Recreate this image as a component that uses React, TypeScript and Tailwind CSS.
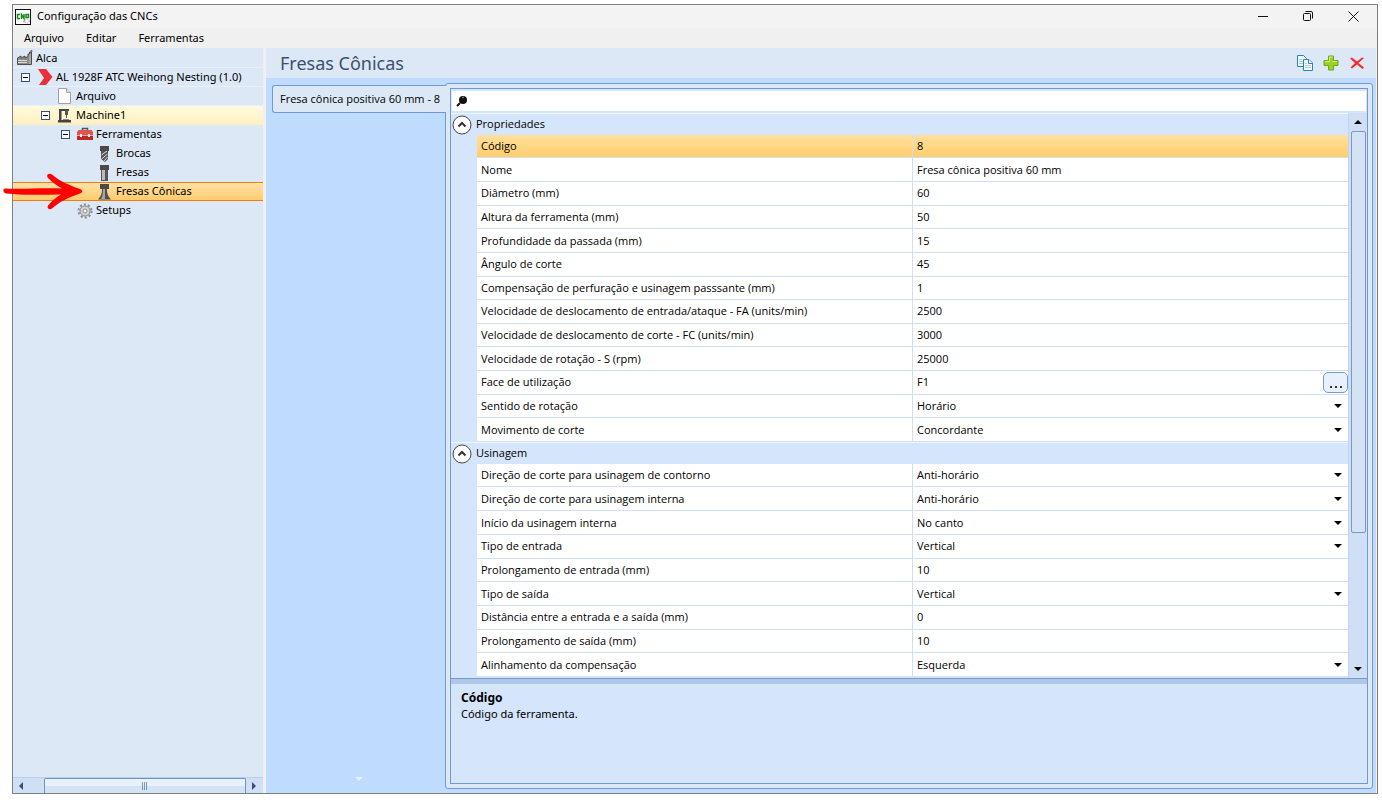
import { useState } from 'react';
import type { ReactNode } from 'react';

type Property = {
    label: string;
    value: string;
    kind?: 'select' | 'dialog';
};

type TreeNode = {
    label: string;
    level: number;
    icon: ReactNode;
    expandable?: boolean;
    state?: 'banded' | 'active' | 'selected';
};

const generalProperties: Property[] = [
    { label: 'Código', value: '8' },
    { label: 'Nome', value: 'Fresa cônica positiva 60 mm' },
    { label: 'Diâmetro (mm)', value: '60' },
    { label: 'Altura da ferramenta (mm)', value: '50' },
    { label: 'Profundidade da passada (mm)', value: '15' },
    { label: 'Ângulo de corte', value: '45' },
    { label: 'Compensação de perfuração e usinagem passsante (mm)', value: '1' },
    { label: 'Velocidade de deslocamento de entrada/ataque - FA (units/min)', value: '2500' },
    { label: 'Velocidade de deslocamento de corte - FC (units/min)', value: '3000' },
    { label: 'Velocidade de rotação - S (rpm)', value: '25000' },
    { label: 'Face de utilização', value: 'F1', kind: 'dialog' },
    { label: 'Sentido de rotação', value: 'Horário', kind: 'select' },
    { label: 'Movimento de corte', value: 'Concordante', kind: 'select' },
];

const millingProperties: Property[] = [
    { label: 'Direção de corte para usinagem de contorno', value: 'Anti-horário', kind: 'select' },
    { label: 'Direção de corte para usinagem interna', value: 'Anti-horário', kind: 'select' },
    { label: 'Início da usinagem interna', value: 'No canto', kind: 'select' },
    { label: 'Tipo de entrada', value: 'Vertical', kind: 'select' },
    { label: 'Prolongamento de entrada (mm)', value: '10' },
    { label: 'Tipo de saída', value: 'Vertical', kind: 'select' },
    { label: 'Distância entre a entrada e a saída (mm)', value: '0' },
    { label: 'Prolongamento de saída (mm)', value: '10' },
    { label: 'Alinhamento da compensação', value: 'Esquerda', kind: 'select' },
];

const treeNodes: TreeNode[] = [
    { label: 'Alca', level: 0, icon: <FactoryIcon />, state: 'banded' },
    { label: 'AL 1928F ATC Weihong Nesting (1.0)', level: 1, icon: <BrandIcon />, expandable: true, state: 'banded' },
    { label: 'Arquivo', level: 2, icon: <FileIcon />, state: 'banded' },
    { label: 'Machine1', level: 2, icon: <MachineIcon />, expandable: true, state: 'active' },
    { label: 'Ferramentas', level: 3, icon: <ToolboxIcon />, expandable: true },
    { label: 'Brocas', level: 4, icon: <DrillIcon /> },
    { label: 'Fresas', level: 4, icon: <MillIcon /> },
    { label: 'Fresas Cônicas', level: 4, icon: <ConicalMillIcon />, state: 'selected' },
    { label: 'Setups', level: 3, icon: <GearIcon /> },
];

const indents = ['pl-1', 'pl-1', 'pl-6', 'pl-11', 'pl-16'];

const rowStyles = {
    banded: 'border-b border-[#e8f0fb]',
    active: 'bg-linear-to-b from-[#fffbdc] to-[#ffefc0]',
    selected: 'border-y border-[#f57c0a] bg-linear-to-b from-[#ffe2a6] to-[#ffcb6b]',
};

export default function App() {
    return (
        <div className="flex h-screen min-h-[800px] flex-col bg-white pt-1 pr-1 pb-[6px] pl-3 font-['Noto_Sans','Open_Sans',sans-serif] text-black">
            <div className="flex flex-1 flex-col border border-[#808080]">
                <TitleBar />
                <nav className="flex h-5 items-center gap-[22px] bg-[#f0f0f0] px-[11px] text-[11px]">
                    <button type="button">Arquivo</button>
                    <button type="button">Editar</button>
                    <button type="button">Ferramentas</button>
                </nav>
                <div className="flex flex-1 bg-[#f0f0f0] pr-px">
                    <Sidebar />
                    <ToolEditor />
                </div>
            </div>
        </div>
    );
}

function TitleBar() {
    return (
        <header className="flex h-[23px] items-center bg-[#f3f3f3] px-[2px]">
            <AppIcon />
            <h1 className="ml-[6px] flex-1 text-[11px]">Configuração das CNCs</h1>
            <button type="button" aria-label="Minimizar" className="flex w-[45px] justify-center">
                <svg width="12" height="12" viewBox="0 0 12 12" stroke="#111" fill="none"><path d="M1 5.5h10" /></svg>
            </button>
            <button type="button" aria-label="Restaurar" className="flex w-[45px] justify-center">
                <svg width="12" height="12" viewBox="0 0 12 12" stroke="#111" fill="none">
                    <rect x="1.5" y="2.5" width="7" height="7" rx="1" />
                    <path d="M3.5.5h5.500a1.500 1.500 0 0 1 1.500 1.500v5.500" />
                </svg>
            </button>
            <button type="button" aria-label="Fechar" className="flex w-[45px] justify-center">
                <svg width="12" height="12" viewBox="0 0 12 12" stroke="#111" fill="none"><path d="M1.500.5l10 10M11.500.5l-10 10" /></svg>
            </button>
        </header>
    );
}

function Sidebar() {
    return (
        <aside className="relative mr-[3px] flex w-[250px] shrink-0 flex-col bg-[#dde8f6]">
            <ul className="flex-1 pt-px text-[11px]">
                {treeNodes.map((node) => (
                    <TreeRow key={node.label + node.level} node={node} />
                ))}
            </ul>
            <HorizontalScrollbar />
            <PointerArrow />
        </aside>
    );
}

function TreeRow({ node }: { node: TreeNode }) {
    return (
        <li className={`flex h-[19px] items-center ${indents[node.level]} ${node.state ? rowStyles[node.state] : ''}`}>
            {node.level > 0 && (
                <span className="flex w-5 shrink-0 pl-1">
                    {node.expandable && (
                        <button type="button" aria-label={`Recolher ${node.label}`}>
                            <svg width="9" height="9" viewBox="0 0 9 9">
                                <rect x=".5" y=".5" width="8" height="8" fill="#fff" stroke="#33508a" />
                                <path d="M2 4.500h5" stroke="#000" />
                            </svg>
                        </button>
                    )}
                </span>
            )}
            <button type="button" className="flex items-center gap-[3px] whitespace-nowrap">
                {node.icon}
                <span>{node.label}</span>
            </button>
        </li>
    );
}

function HorizontalScrollbar() {
    return (
        <div className="flex h-4 border-t border-[#b9cfeb] bg-[#cfdff5]">
            <button type="button" aria-label="Rolar para a esquerda" className="flex w-[31px] items-center pl-[6px]">
                <svg width="4" height="8" viewBox="0 0 4 8"><path d="M4 0v8L0 4z" fill="#3f4f74" /></svg>
            </button>
            <div className="flex flex-1 items-center justify-center gap-px rounded-t-[2px] border border-b-0 border-[#6f93c4] bg-linear-to-b from-[#e8f0fc] from-50% to-[#d3e2f5] to-50%">
                <svg width="6" height="8" viewBox="0 0 6 8" stroke="#7d98c4"><path d="M.5 0v8M2.500 0v8M4.500 0v8" /></svg>
            </div>
            <button type="button" aria-label="Rolar para a direita" className="flex w-[17px] items-center pl-[6px]">
                <svg width="4" height="8" viewBox="0 0 4 8"><path d="M0 0v8l4-4z" fill="#3f4f74" /></svg>
            </button>
        </div>
    );
}

function ToolEditor() {
    return (
        <main className="flex min-w-0 flex-1 flex-col bg-[#bfdbff]">
            <div className="flex h-[30px] items-center gap-[10px] bg-[#dde8f6] pr-[11px] pl-[14px]">
                <h2 className="flex-1 text-lg text-[#3c5170]">Fresas Cônicas</h2>
                <button type="button" aria-label="Copiar"><CopyIcon /></button>
                <button type="button" aria-label="Adicionar"><AddIcon /></button>
                <button type="button" aria-label="Excluir"><DeleteIcon /></button>
            </div>
            <div className="flex flex-1 pt-[5px] pr-[3px] pb-1 pl-[6px]">
                <div className="z-10 -mr-px flex w-[174px] shrink-0 flex-col items-center justify-between pt-[2px] pb-2">
                    <button
                        type="button"
                        className="h-7 w-full rounded-l-[3px] border border-r-0 border-[#6f9ad6] bg-[#dde8f6] px-[7px] text-left font-['Open_Sans',sans-serif] text-[11px] whitespace-nowrap"
                    >
                        Fresa cônica positiva 60 mm - 8
                    </button>
                    <svg width="8" height="4" viewBox="0 0 8 4"><path d="M0 0h8L4 4z" fill="#e6f0ff" /></svg>
                </div>
                <div className="flex min-w-0 flex-1 rounded-[3px] border border-[#6f9ad6] bg-[#dde8f6] p-1">
                    <PropertyGrid />
                </div>
            </div>
        </main>
    );
}

function PropertyGrid() {
    return (
        <div className="flex min-w-0 flex-1 flex-col border border-[#6f9ad6] bg-[#d5e6fc] font-['Open_Sans',sans-serif] text-[11px]">
            <label className="mx-px mt-[2px] flex h-5 items-center gap-1 bg-white pl-1">
                <SearchIcon />
                <input type="text" aria-label="Pesquisar" className="min-w-0 flex-1 bg-transparent outline-none" />
            </label>
            <div className="flex flex-1 pt-[2px]">
                <div className="flex min-w-0 flex-1 flex-col pb-px">
                    <Section title="Propriedades" items={generalProperties} className="h-[307px]" selected={0} />
                    <Section title="Usinagem" items={millingProperties} className="h-[213px]" />
                </div>
                <VerticalScrollbar />
            </div>
            <div className="h-[6px] border-t border-[#6f9ad6] bg-[#b1c7e6]" />
            <div className="h-[99px] px-[10px] pt-[6px] font-['Noto_Sans',sans-serif]">
                <h3 className="text-xs leading-4 font-bold">Código</h3>
                <p className="text-[11px] leading-4">Código da ferramenta.</p>
            </div>
        </div>
    );
}

function Section({ title, items, className, selected }: { title: string; items: Property[]; className: string; selected?: number }) {
    return (
        <section className="border-t border-[#f0f7ff]">
            <div className="flex h-[21px] items-center gap-1 pl-px">
                <button type="button" aria-label={`Recolher ${title}`}>
                    <svg width="20" height="20" viewBox="0 0 20 20" fill="none">
                        <circle cx="10" cy="10" r="9" fill="#fff" stroke="#444" />
                        <path d="M6.500 11.500L10 8l3.500 3.500" stroke="#333" strokeWidth="2" />
                    </svg>
                </button>
                <h3>{title}</h3>
            </div>
            <div className="pl-[26px]">
                <table className={`w-full table-fixed border-collapse bg-white ${className}`}>
                    <tbody>
                        {items.map((item, i) => (
                            <PropertyRow key={item.label} item={item} selected={i === selected} />
                        ))}
                    </tbody>
                </table>
            </div>
        </section>
    );
}

function PropertyRow({ item, selected }: { item: Property; selected: boolean }) {
    const [value, setValue] = useState(item.value);

    return (
        <tr className={`border-b border-[#cfe0f5] ${selected ? 'bg-linear-to-b from-[#ffe09c] to-[#ffcd6c]' : ''}`}>
            <th scope="row" className="w-1/2 border-r border-[#cfe0f5] p-0 pl-1 text-left font-normal">
                <label htmlFor={item.label} className="block leading-4 whitespace-nowrap">{item.label}</label>
            </th>
            <td className="p-0 pl-1">
                <div className="flex h-4 items-center">
                    {item.kind === 'select' ? (
                        <div className="relative flex flex-1 items-center">
                            <select
                                id={item.label}
                                value={value}
                                onChange={(e) => setValue(e.target.value)}
                                className="h-4 w-full appearance-none bg-transparent leading-4 outline-none"
                            >
                                <option>{item.value}</option>
                            </select>
                            <svg width="8" height="4" viewBox="0 0 8 4" className="pointer-events-none absolute right-[6px]">
                                <path d="M0 0h8L4 4z" />
                            </svg>
                        </div>
                    ) : (
                        <input
                            id={item.label}
                            type="text"
                            value={value}
                            onChange={(e) => setValue(e.target.value)}
                            className="h-4 min-w-0 flex-1 bg-transparent leading-4 outline-none"
                        />
                    )}
                    {item.kind === 'dialog' && (
                        <button type="button" aria-label="Editar faces" className="flex h-[21px] w-[25px] items-end justify-center rounded-[5px] border border-[#7d9ac6] bg-[#e8f0fc] pb-1">
                            <svg width="12" height="2" viewBox="0 0 12 2" fill="#333"><path d="M0 0h2v2H0zM5 0h2v2H5zM10 0h2v2h-2z" /></svg>
                        </button>
                    )}
                </div>
            </td>
        </tr>
    );
}

function VerticalScrollbar() {
    return (
        <div className="flex w-[19px] shrink-0 flex-col items-center border-l border-[#c3d5ee] bg-[#cfdff5]">
            <button type="button" aria-label="Rolar para cima" className="flex h-[18px] w-full items-center justify-center">
                <svg width="8" height="4" viewBox="0 0 8 4"><path d="M4 0l4 4H0z" /></svg>
            </button>
            <div className="w-full flex-1 pr-px pl-[2px]">
                <div className="h-[76%] w-full rounded-[2px] border border-[#7d97c4] bg-[#d4e3f4]" />
            </div>
            <button type="button" aria-label="Rolar para baixo" className="flex h-[18px] w-full items-center justify-center">
                <svg width="8" height="4" viewBox="0 0 8 4"><path d="M0 0h8L4 4z" /></svg>
            </button>
        </div>
    );
}

// Hand drawn arrow that points at the selected tree node
function PointerArrow() {
    return (
        <svg
            width="82"
            height="38"
            viewBox="0 0 82 38"
            className="pointer-events-none absolute top-[124px] -left-3"
            fill="#fe0000"
        >
            <path d="M4 16.500C20 17.500 42 15.500 61 16.500C56 13.500 51 10.500 47 6C44.500 3 48 .5 51 2.500C58 9 69 13.500 79 17C82 18.500 82 20 79 21.500C68 25 58 30 51 36.500C48 38.500 45 35.500 47.500 33C51 28.500 55 25.500 60 22.500C42 22.500 22 23.500 5 21.500C2 21 1.500 17 4 16.500z" />
        </svg>
    );
}

function AppIcon() {
    return (
        <svg width="16" height="16" viewBox="0 0 16 16" fill="none">
            <rect x=".5" y=".5" width="15" height="15" fill="#fff" stroke="#111" />
            <path d="M5 5.500H2.500v4H5M6.500 10V5.500L9 9.500V5M11 5.500h2.500v3H11z" stroke="#138a1c" strokeWidth="1.500" />
            <circle cx="12" cy="12" r="2" stroke="#999" strokeDasharray="1 1" />
            <circle cx="9" cy="12.500" r="1" fill="#aaa" />
        </svg>
    );
}

function FactoryIcon() {
    return (
        <svg width="16" height="16" viewBox="0 0 16 16">
            <path d="M.5 14.500V8L4 6v2l4-2v2l3-1.500V4h1.500v-2h2v12.500z" fill="#8a8a8a" stroke="#4d4d4d" />
            <path d="M1 10.500h9M1 12.500h9" stroke="#dcdcdc" />
            <path d="M13 4v10" stroke="#c4c4c4" />
            <circle cx="14.500" cy="1" r="1" fill="#666" />
        </svg>
    );
}

function BrandIcon() {
    return (
        <svg width="16" height="16" viewBox="0 0 16 16">
            <path d="M1 0h8l6.500 8L9 16H2l5-7z" fill="#ec2f36" />
        </svg>
    );
}

function FileIcon() {
    return (
        <svg width="16" height="16" viewBox="0 0 16 16">
            <path d="M1.500.5h8l4 4v11h-12z" fill="#fdfdfd" stroke="#a3a3a3" />
            <path d="M9.500.5v4h4" fill="#e6e6e6" stroke="#a3a3a3" />
        </svg>
    );
}

function MachineIcon() {
    return (
        <svg width="16" height="16" viewBox="0 0 16 16">
            <path d="M2 1h10v2H2zM2 3h2v10H2z" fill="#444" />
            <path d="M4.500 3v9" stroke="#999" />
            <path d="M8 2h3v5H8zM9 7h1v3H9z" fill="#555" />
            <path d="M1 12h13v2.500H1z" fill="#444" />
            <path d="M6 11.500h6" stroke="#888" />
        </svg>
    );
}

function ToolboxIcon() {
    return (
        <svg width="16" height="16" viewBox="0 0 16 16" fill="none">
            <path d="M5.500 4V1.500h5V4" stroke="#555" strokeWidth="1.500" />
            <path d="M0 5l1.500-2h13L16 5v3H0z" fill="#e0564d" />
            <path d="M0 8h16v5H0z" fill="#bd2a26" />
            <path d="M0 8.500h16" stroke="#f4a29a" />
            <path d="M3 7h2v3H3zM11 7h2v3h-2z" fill="#eee" />
        </svg>
    );
}

function DrillIcon() {
    return (
        <svg width="16" height="16" viewBox="0 0 16 16">
            <path d="M4 4h7v9l-3 3-4-3z" fill="#555" />
            <path d="M4.500 9l5.500-4M4.500 13l6-5M7 15l3.500-4" stroke="#ddd" />
            <path d="M3 0h9v5H3z" fill="#4a4a4a" />
        </svg>
    );
}

function MillIcon() {
    return (
        <svg width="16" height="16" viewBox="0 0 16 16">
            <path d="M4 4h7v12H4z" fill="#555" />
            <path d="M5 5h3v10H5z" fill="#bbb" />
            <path d="M3 0h9v5H3z" fill="#4a4a4a" />
        </svg>
    );
}

function ConicalMillIcon() {
    return (
        <svg width="16" height="16" viewBox="0 0 16 16">
            <path d="M5 5h5c0 5 1 7 4 10.500H1c3-3.500 4-5.500 4-10.500z" fill="#4f4f4f" />
            <path d="M6 5h2v10H4c1.500-2.500 2-5 2-10z" fill="#a5a5a5" />
            <path d="M3 0h9v5H3z" fill="#4a4a4a" />
        </svg>
    );
}

function GearIcon() {
    return (
        <svg width="16" height="16" viewBox="0 0 16 16" fill="none">
            <circle cx="8" cy="8" r="6.500" stroke="#8b8b8b" strokeWidth="2" strokeDasharray="2.100 2" />
            <circle cx="8" cy="8" r="5" fill="#d4d4d4" stroke="#8b8b8b" />
            <circle cx="8" cy="8" r="2" fill="#f5f5f5" stroke="#8b8b8b" />
        </svg>
    );
}

function CopyIcon() {
    return (
        <svg width="16" height="16" viewBox="0 0 16 16" stroke="#2683b8">
            <path d="M.5.5h6l3 3v8h-9z" fill="#f1faff" />
            <path d="M2 4.500h3M2 6.500h5M2 8.500h5" stroke="#a9cfe2" />
            <path d="M6.500 4.500h5.500l3.500 3.500v7.500h-9z" fill="#f1faff" />
            <path d="M11.500 4.500v4h4" fill="#fff" />
            <path d="M8 8.500h2M8 10.500h6M8 12.500h6" stroke="#a9cfe2" />
        </svg>
    );
}

function AddIcon() {
    return (
        <svg width="16" height="16" viewBox="0 0 16 16">
            <path d="M5.500 1h5v4.500H15v5h-4.500V15h-5v-4.500H1v-5h4.500z" fill="#9dd126" stroke="#6da51c" />
            <path d="M6.500 6.500V2h3M2 6.500h4.500M9.500 6.500H14" stroke="#d3ef8c" fill="none" />
        </svg>
    );
}

function DeleteIcon() {
    return (
        <svg width="16" height="16" viewBox="0 0 16 16">
            <path d="M1 3.500l2-1 5 4 5-4 2 .5L9.500 8l5.500 4.500-1.500 1.500L8 9.500l-5 4-1.500-1L6 8z" fill="#f22c2c" />
        </svg>
    );
}

function SearchIcon() {
    return (
        <svg width="12" height="12" viewBox="0 0 12 12">
            <circle cx="7" cy="5" r="4" fill="#111" />
            <path d="M4 8l-3 3" stroke="#111" strokeWidth="2" />
            <path d="M6 3l2-1" stroke="#999" />
        </svg>
    );
}
